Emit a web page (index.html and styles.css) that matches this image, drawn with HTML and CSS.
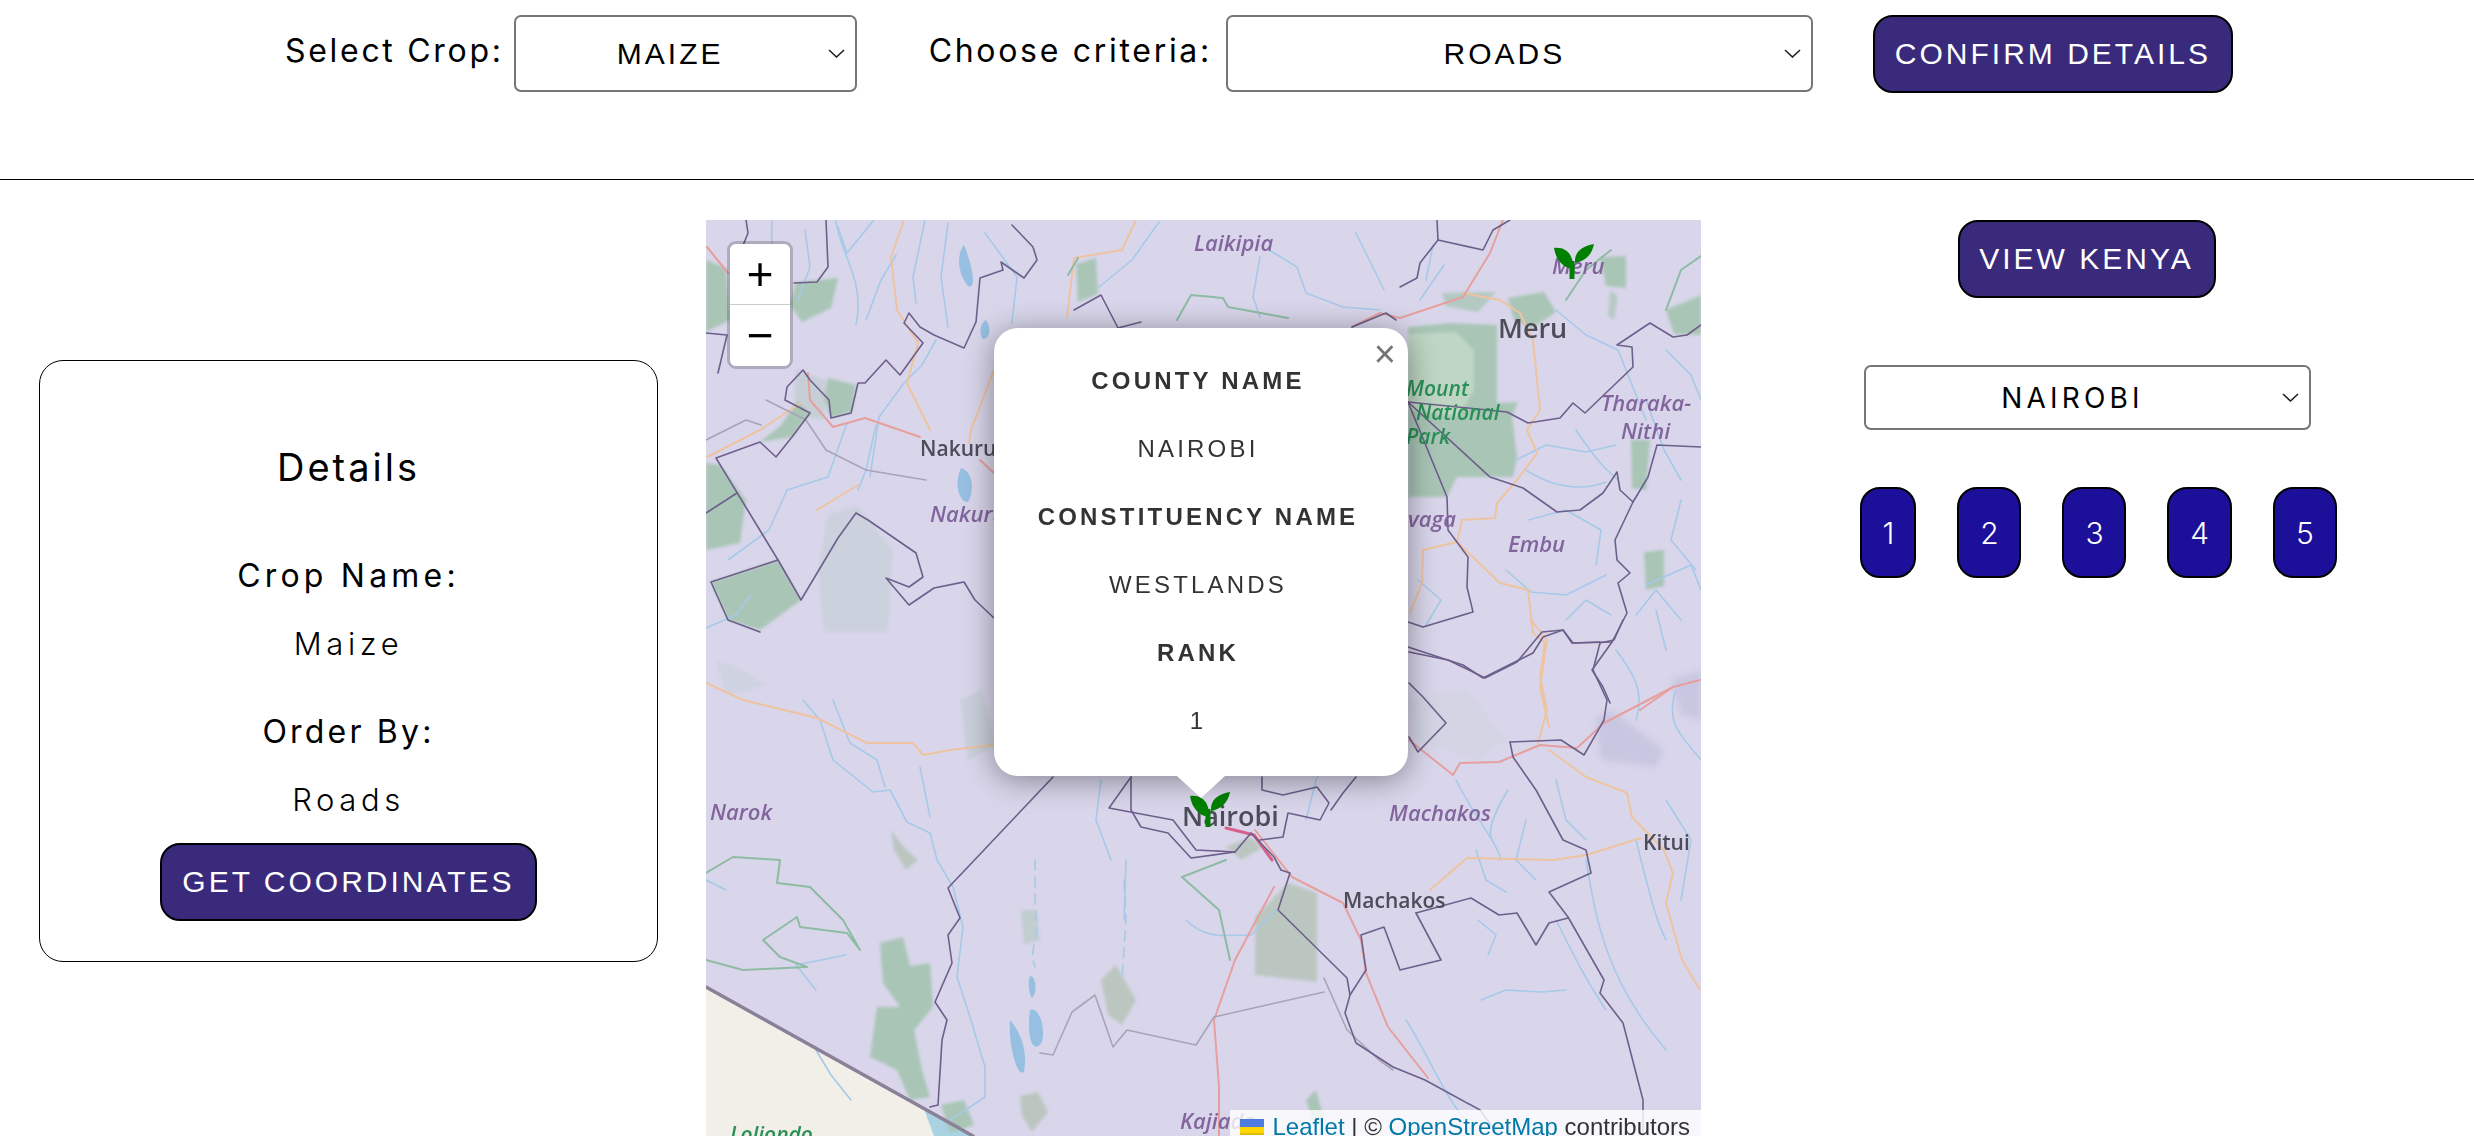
FILE: index.html
```html
<!DOCTYPE html>
<html lang="en" dir="ltr">

<head>
  <meta charset="utf-8">
  <title>Crop Suitability</title>
  <link rel="stylesheet" href="styles.css">
</head>

<body>
  <header class="topbar">
    <label class="top-label label-crop">Select Crop:</label>
    <select class="picker picker-crop">
      <option>MAIZE</option>
    </select>
    <label class="top-label label-criteria">Choose criteria:</label>
    <select class="picker picker-criteria">
      <option>ROADS</option>
    </select>
    <button class="btn btn-confirm" type="button">CONFIRM DETAILS</button>
  </header>

  <main class="content">
    <section class="details">
      <h2 class="details-title">Details</h2>
      <h3 class="details-head head-crop">Crop Name:</h3>
      <p class="details-value">Maize</p>
      <h3 class="details-head head-order">Order By:</h3>
      <p class="details-value">Roads</p>
      <button class="btn btn-coords" type="button">GET COORDINATES</button>
    </section>

    <div class="map">
      <svg class="map-art" viewBox="0 0 995 916" xmlns="http://www.w3.org/2000/svg">
        <defs>
          <g id="sprout">
            <path d="M18 35V17" class="stem" />
            <path d="M0 4C9 3 17 7 19 19C20 22 20 24 19 25C10 24 2 17 0 4Z" />
            <path d="M40 0C38 10 32 17 21 19C20 9 27 2 40 0Z" />
          </g>
        </defs>
        <rect class="land" width="995" height="916" />
        <path class="outside" d="M0 767L267 916H0Z" />
        <path class="outside-lake" d="M218 889L267 916H228Z" />

        <g class="parks">
          <path d="M702 107L744 103L791 105L791 183L812 182L806 197L811 237L807 257L751 257L741 277H702Z" />
          <path class="park-light" d="M702 114L750 112L768 130L768 170L752 196L702 190Z" />
          <path d="M0 243L14 245L40 280L34 323L0 330Z" />
          <path d="M5 362L72 340L95 380L54 410L22 400Z" />
          <path d="M54 222L86 217L104 193L92 181L74 206Z" />
          <path d="M122 158L150 165L146 192L125 198L118 180Z" />
          <path d="M90 62L132 58L125 88L96 102L84 85Z" />
          <path d="M0 40L20 48L24 100L0 112Z" />
          <path d="M370 44L390 38L392 74L372 82Z" />
          <path d="M736 73L790 72L772 92L740 86Z" opacity=".8" />
          <path d="M802 78L838 72L850 92L826 108L808 100Z" />
          <path d="M894 37L920 36L920 68L900 66Z" />
          <path d="M960 90L995 75V115L968 114Z" />
          <path d="M904 70L912 76L908 100L902 96Z" opacity=".7" />
          <path d="M925 220L944 220L940 270L926 268Z" />
          <path d="M938 332L958 330L958 366L940 370Z" />
          <path d="M174 723L197 717L204 746L224 743L227 787L208 810L216 850L224 877L204 880L191 850L164 837L171 787L194 787L177 763Z" />
          <path class="park-gray" d="M549 697L582 663L611 673V762L549 755Z" />
          <path class="park-gray" d="M314 876L332 872L342 892L326 912L316 896Z" />
          <path class="park-gray" d="M395 760L410 745L430 780L416 805L402 795Z" />
          <path class="park-gray" d="M520 627L545 617L556 628L535 640Z" />
          <path class="park-gray" d="M185 610L196 625L212 640L200 650L188 630Z" />
          <path d="M235 885L258 880L268 905L244 913Z" />
          <path d="M600 880L610 870L618 900L608 905Z" />
          <path d="M122 295L150 285L187 330L182 412L118 412L112 350Z" opacity=".25" />
          <path d="M10 440L40 452L60 466L20 475Z" opacity=".2" />
          <path d="M315 690L330 690L334 720L318 725Z" opacity=".5" />
          <path d="M90 150L120 160L118 200L88 195Z" opacity=".4" />
          <path d="M254 480L276 470L290 525L262 540Z" opacity=".3" />
          <path d="M700 480L760 470L800 520L770 540L712 520Z" opacity=".12" />
        </g>
        <path class="haze" d="M889 500L905 490L958 530L950 547L895 540Z" />
        <path class="haze" d="M965 460L995 450V500L975 495Z" />

        <g class="water">
          <path d="M66 0C64 40 72 60 55 100" />
          <path d="M99 10L104 47L92 80" />
          <path d="M132 7L141 33L168 0" />
          <path d="M219 0L207 57L210 83" />
          <path d="M242 3L235 57L242 107" />
          <path d="M279 13L311 57L306 103" />
          <path d="M453 2L426 40L393 67" />
          <path d="M563 30L591 47L600 73L637 87L674 90" />
          <path d="M554 37L547 77L554 97" />
          <path d="M650 13L678 70" />
          <path d="M130 0C132 30 160 60 150 105" />
          <path d="M230 120L216 145L198 163L173 197L164 257" />
          <path d="M141 203L122 257L81 270L63 310L22 340" />
          <path d="M170 205L160 250L152 270" />
          <path d="M0 408L30 395L45 375" />
          <path d="M160 100L175 60L190 35" />
          <path d="M727 25L720 60" />
          <path d="M738 45L714 80" />
          <path d="M850 90L880 115L912 130L940 200" />
          <path d="M870 210C890 240 900 250 912 260" />
          <path d="M810 240L840 225L880 232L910 225" />
          <path d="M820 250C850 270 880 270 900 262" />
          <path d="M822 300L860 290L895 310L890 345" />
          <path d="M800 350L825 372L860 375L900 355" />
          <path d="M940 180L958 230L975 260" />
          <path d="M960 130L985 155L995 180" />
          <path d="M975 280L965 320L990 350" />
          <path d="M940 365L985 345L995 370" />
          <path d="M930 395L950 370L975 400" />
          <path d="M950 390L960 430" />
          <path d="M860 400L880 380L905 395" />
          <path d="M910 430C925 450 940 470 930 500" />
          <path d="M970 470C960 500 970 510 995 540" />
          <path d="M720 405L735 380L712 360" />
          <path d="M97 480L114 500L127 540L167 572L184 570L201 602L224 613L231 640L247 667L257 707L251 757L264 797L279 847L279 877L244 900" />
          <path d="M127 480L144 523L171 540L179 567" />
          <path d="M214 547L224 597" />
          <path d="M750 560C770 600 790 620 795 640" />
          <path d="M802 570C790 590 780 610 786 620" />
          <path d="M880 640C890 700 900 760 960 830" />
          <path d="M480 700C500 720 520 715 545 715C560 700 565 695 570 690" />
          <path d="M930 620C945 680 950 700 960 720" />
          <path d="M700 800C720 830 740 880 760 900" />
          <path d="M850 700C870 740 880 760 900 790" />
          <path d="M772 700L790 715L782 735" />
          <path d="M770 630L780 660L800 672" />
          <path d="M820 600L810 640L830 660" />
          <path d="M850 560L860 600L880 620" />
          <path d="M960 580L985 620L975 680" />
          <path d="M775 780L800 770L835 772L860 770" />
          <path d="M420 640L418 700" />
          <path d="M145 880L125 855L110 830" />
          <path d="M140 735L90 745L110 770" />
          <path d="M0 660L20 670" />
          <path d="M620 540L610 560L600 600" />
          <path d="M395 560L390 600L405 640" />
          <path class="dashed" d="M329 640V680L331 707L326 737L329 747" />
          <path class="dashed" d="M418 660L420 700L416 760" />
        </g>
        <path class="lake" d="M258 25C268 50 270 70 262 66C252 55 250 35 258 25Z" />
        <path class="lake" d="M280 100C288 112 280 122 276 118C272 110 276 102 280 100Z" />
        <path class="lake" d="M255 248C265 250 270 268 262 282C252 282 248 262 255 248Z" />
        <path class="lake" d="M324 790C332 786 340 805 336 822C328 835 320 820 324 790Z" />
        <path class="lake" d="M304 800C314 812 322 830 318 852C310 858 302 820 304 800Z" />
        <path class="lake" d="M324 756C330 756 332 772 326 778C322 772 322 762 324 756Z" />

        <g class="roads-orange">
          <path d="M430 0L416 30L368 38L361 97" />
          <path d="M198 0L185 37L191 90L212 123L201 163L224 210" />
          <path d="M288 150L265 210L263 223" />
          <path d="M1 237L54 210L95 183" />
          <path d="M111 290L152 265" />
          <path d="M0 463L37 480L111 498L161 523L207 523L217 535L244 530L287 525" />
          <path d="M757 73L794 80L814 93L827 120L834 190L821 210L831 233L811 260L791 283L789 298L756 300L751 322L717 330L716 363L704 393" />
          <path d="M751 322L794 363L822 370L827 413L839 423L834 457L841 490L832 523" />
          <path d="M825 400L841 420L834 467L843 507" />
          <path d="M843 530L880 557L921 573L926 597L958 630L967 653L960 683L976 740L994 770" />
          <path d="M724 670L761 638L848 640L880 635L935 618" />
        </g>
        <g class="roads-red">
          <path d="M1 27L22 53" />
          <path d="M102 153L104 180L127 207L159 198L214 217" />
          <path d="M274 240L288 253" />
          <path d="M797 0L784 33L757 77L694 98L674 93L646 107" />
          <path d="M703 520L747 555L754 543L793 542L834 525L871 528L898 503L967 467L994 460" />
          <path d="M508 800L513 867L513 916" />
          <path d="M508 800L529 740L568 667" />
          <path d="M549 610L586 657L637 683L655 720L660 753L682 807L722 858" />
          <path d="M934 490L967 467" />
          <path class="road-hot" d="M520 608L548 615L566 640" />
        </g>
        <g class="lines-green">
          <path d="M0 653L27 637L74 640L71 663L104 667L137 700L154 730L141 713L94 707L91 697L57 720L74 737L101 747L37 750L0 740" />
          <path d="M476 657L513 690L524 740" />
          <path d="M476 657L520 640" />
          <path d="M471 100L485 75L517 78L522 87L582 98" />
          <path d="M362 55L372 38" />
          <path d="M960 90L975 50L995 36" />
          <path d="M860 80L880 50L905 30" />
        </g>
        <g class="borders-gray">
          <path d="M508 797L618 772" />
          <path d="M508 797L490 825L421 810L407 827L389 775L366 792L347 835L334 833" />
          <path d="M618 758L641 810L673 840L687 850" />
          <path d="M60 180L100 200L120 230L160 250L220 260" />
          <path d="M0 220L40 200L55 205" />
        </g>
        <g class="borders">
          <path d="M40 0L42 13L36 28" />
          <path d="M120 0L122 47L111 62L88 63" />
          <path d="M0 113L21 115L12 153" />
          <path d="M306 5L327 27L331 40L318 58L295 42L297 50L274 58L270 102L258 128L228 115L214 107L203 93L198 103L217 123L194 155L180 140L159 163L152 163L145 193L125 198L123 180L104 160L97 150L81 167L79 180L104 193L86 217L70 237L54 222L10 238L72 340L95 380L132 318L150 293L162 300L210 333L217 357L203 367L180 358L203 385L228 368L258 362L269 380L288 398" />
          <path d="M72 340L5 362L22 400L54 412" />
          <path d="M31 273L0 293" />
          <path d="M347 557L242 668L254 698L242 715L246 743L229 782L241 800L236 820L232 885L224 887" />
          <path d="M403 588L425 557M403 588L467 600L490 630L529 632L545 613L568 637L575 650L584 653L572 690L641 758L644 775L639 793L650 823L687 847L719 860L774 890L793 916" />
          <path d="M425 557L425 590L435 607L462 613L485 638L529 632" />
          <path d="M556 557V570L577 575L611 567L623 583L614 600L582 593L577 617L554 620" />
          <path d="M650 557L637 573L625 590" />
          <path d="M804 522L855 520L878 535L898 500L901 480L887 450L894 423L908 420L917 400" />
          <path d="M804 522L807 537L830 570L857 620L880 630L885 653L843 672L862 697L898 760L894 773L917 803L937 880V916" />
          <path d="M710 693L765 678L793 695L811 693L830 725L843 703L862 698" />
          <path d="M710 693L735 740L694 750L678 707L655 715L660 750L644 775" />
          <path d="M703 432L742 440L779 458L811 442L836 412L857 410L866 423L894 422" />
          <path d="M703 463L717 477L740 503L712 532L703 517" />
          <path d="M702 182L801 192L822 203L854 198L867 183L879 193L927 147L926 127L911 125L944 103L967 117L981 115L995 105" />
          <path d="M702 182L784 257L817 268L851 292L874 290L897 273L911 252L914 270L927 282L942 257L951 225L995 227" />
          <path d="M702 182L741 277L742 310L762 337L761 367L767 392L717 407L702 402" />
          <path d="M927 282L909 320L911 340L924 353L912 363L921 393L906 422L867 423L857 410L837 417L827 433L777 458L757 445L702 427" />
          <path d="M906 422L886 450L897 467L904 483" />
          <path d="M731 0L732 20L714 43L711 58L694 67" />
          <path d="M732 20L777 30L787 10L804 0" />
          <path d="M646 107L680 93L690 100" />
          <path d="M368 90L395 75L412 108L435 102" />
        </g>
        <path class="border-country" d="M0 767L267 916" />

        <g class="places">
          <text x="214" y="236">Nakuru</text>
          <text class="place-big" x="792" y="118">Meru</text>
          <text class="place-big" x="476" y="606">Nairobi</text>
          <text x="637" y="688">Machakos</text>
          <text x="937" y="630">Kitui</text>
        </g>
        <g class="regions">
          <text x="488" y="31">Laikipia</text>
          <text x="224" y="302">Nakuru</text>
          <text x="846" y="54">Meru</text>
          <text x="895" y="191">Tharaka-</text>
          <text x="915" y="219">Nithi</text>
          <text x="802" y="332">Embu</text>
          <text x="702" y="307">vaga</text>
          <text x="4" y="600">Narok</text>
          <text x="683" y="601">Machakos</text>
          <text x="474" y="909">Kajiado</text>
        </g>
        <g class="greens">
          <text x="700" y="176">Mount</text>
          <text x="710" y="200">National</text>
          <text x="700" y="224">Park</text>
          <text x="24" y="922">Loliondo</text>
        </g>

        <use href="#sprout" class="marker" x="848" y="24" />
        <use href="#sprout" class="marker" x="484" y="572" />
      </svg>

      <div class="zoom">
        <button class="zoom-btn zoom-in" type="button">+</button>
        <button class="zoom-btn" type="button">&#8722;</button>
      </div>

      <div class="popup">
        <button class="popup-close" type="button">&#215;</button>
        <p class="popup-head">COUNTY NAME</p>
        <p class="popup-text">NAIROBI</p>
        <p class="popup-head">CONSTITUENCY NAME</p>
        <p class="popup-text">WESTLANDS</p>
        <p class="popup-head">RANK</p>
        <p class="popup-text">1</p>
      </div>

      <div class="attribution">
        <svg class="flag" viewBox="0 0 12 8" xmlns="http://www.w3.org/2000/svg">
          <path fill="#4c7be1" d="M0 0h12v4H0z" />
          <path fill="#ffd500" d="M0 4h12v3H0z" />
          <path fill="#e0bc00" d="M0 7h12v1H0z" />
        </svg>
        <a href="#">Leaflet</a> <span class="sep">|</span> &copy; <a href="#">OpenStreetMap</a> contributors
      </div>
    </div>

    <aside class="side">
      <button class="btn btn-kenya" type="button">VIEW KENYA</button>
      <select class="picker picker-county">
        <option>NAIROBI</option>
      </select>
      <div class="ranks">
        <button class="rank" type="button">1</button>
        <button class="rank" type="button">2</button>
        <button class="rank" type="button">3</button>
        <button class="rank" type="button">4</button>
        <button class="rank" type="button">5</button>
      </div>
    </aside>
  </main>
</body>

</html>
```

FILE: styles.css
```css
html,
body {
  height: 100%;
  overflow: hidden;
}

body {
  margin: 0;
  background-color: white;
  color: black;
  font-family: "Inter", "Liberation Sans", sans-serif;
}

.topbar {
  display: flex;
  align-items: flex-start;
  box-sizing: border-box;
  height: 180px;
  padding: 15px 0 0 285px;
  border-bottom: 1px solid black;
}

.top-label {
  margin-top: 16px;
  margin-right: 14px;
  font-size: 32px;
  line-height: 40px;
  letter-spacing: 2.7px;
}

.label-crop {
  margin-right: 10px;
}

.label-criteria {
  margin-left: 72px;
}

.picker {
  appearance: none;
  height: 77px;
  padding: 0 30px 0 0;
  background: white url("data:image/svg+xml,%3Csvg xmlns='http://www.w3.org/2000/svg' viewBox='0 0 17 9'%3E%3Cpath d='M1 1l7.5 7L16 1' fill='none' stroke='%23222' stroke-width='1.6'/%3E%3C/svg%3E") no-repeat right 10px center / 17px 9px;
  border: 2px solid #767676;
  border-radius: 7px;
  color: black;
  font-family: "Liberation Sans", sans-serif;
  font-size: 30px;
  letter-spacing: 3px;
  text-align: center;
}

.picker-crop {
  width: 343px;
}

.picker-criteria {
  width: 587px;
}

.picker-county {
  width: 447px;
  height: 65px;
  margin-top: 67px;
  font-family: "Inter", sans-serif;
  font-size: 28px;
  letter-spacing: 4.2px;
}

.btn {
  height: 78px;
  padding: 0;
  background-color: #3a2a7c;
  border: 2px solid black;
  border-radius: 20px;
  color: white;
  font-family: "Liberation Sans", sans-serif;
  font-size: 30px;
  letter-spacing: 3px;
}

.btn-confirm {
  width: 360px;
  margin-left: 60px;
}

.btn-coords {
  width: 377px;
  margin-top: 19px;
}

.btn-kenya {
  width: 258px;
  margin-right: 2px;
}

.content {
  display: flex;
  align-items: flex-start;
  padding-top: 40px;
}

.details {
  display: flex;
  flex-direction: column;
  align-items: center;
  box-sizing: border-box;
  width: 619px;
  height: 602px;
  margin: 140px 0 0 39px;
  padding-top: 81px;
  border: 1px solid black;
  border-radius: 24px;
}

.details-title {
  margin: 0;
  font-size: 38px;
  font-weight: 400;
  line-height: 50px;
  letter-spacing: 3px;
}

.details-head {
  margin: 60px 0 0;
  font-size: 32px;
  font-weight: 400;
  line-height: 48px;
  letter-spacing: 3.2px;
}

.head-crop {
  letter-spacing: 4.2px;
}

.head-order {
  margin-top: 40px;
}

.details-value {
  margin: 20px 0 0;
  font-size: 31px;
  font-weight: 300;
  line-height: 48px;
  letter-spacing: 4.6px;
}

.map {
  position: relative;
  flex: none;
  width: 995px;
  height: 916px;
  margin-left: 48px;
  overflow: hidden;
}

.map-art {
  display: block;
  width: 995px;
  height: 916px;
}

.land {
  fill: #d9d6eb;
}

.outside {
  fill: #f1efe8;
}

.outside-lake {
  fill: #a9d3e2;
}

.parks {
  fill: #a9c5b6;
  filter: blur(1.5px);
}

.park-light {
  fill: #bfd6c4;
}

.park-gray {
  fill: #bbc6c0;
}

.haze {
  fill: #c8c6e0;
  filter: blur(3px);
}

.water,
.roads-orange,
.roads-red,
.lines-green,
.borders-gray,
.borders,
.border-country {
  fill: none;
  stroke-linejoin: round;
  stroke-linecap: round;
}

.water {
  stroke: #a6c9e8;
  stroke-width: 1.6;
}

.dashed {
  stroke-dasharray: 10 7;
}

.lake {
  fill: #96bfe2;
}

.roads-orange {
  stroke: #eec39f;
  stroke-width: 2;
}

.roads-red {
  stroke: #e79f9e;
  stroke-width: 2;
}

.road-hot {
  stroke: #d8608a;
  stroke-width: 3;
}

.lines-green {
  stroke: #8ebba4;
  stroke-width: 2;
}

.borders-gray {
  stroke: #a9a3b8;
  stroke-width: 1.6;
}

.borders {
  stroke: #6d5f8b;
  stroke-width: 1.6;
}

.border-country {
  stroke: #8a8198;
  stroke-width: 3.5;
}

.places text,
.regions text,
.greens text {
  font-family: "Open Sans", sans-serif;
  font-size: 21px;
}

.places text {
  fill: #4d4d5a;
  font-weight: 600;
}

.places .place-big {
  font-size: 27px;
}

.regions text {
  fill: #83659d;
  font-size: 22px;
  font-style: italic;
  font-weight: 600;
}

.greens text {
  fill: #2a9057;
  font-style: italic;
  font-weight: 600;
}

.marker {
  fill: green;
}

.stem {
  fill: none;
  stroke: green;
  stroke-width: 5;
}

.zoom {
  position: absolute;
  top: 21px;
  left: 21px;
  display: flex;
  flex-direction: column;
  width: 60px;
  border: 3px solid rgba(0, 0, 0, 0.2);
  border-radius: 9px;
}

.zoom-btn {
  width: 60px;
  height: 61px;
  padding: 6px 0 0;
  background-color: white;
  border: none;
  border-radius: 0 0 6px 6px;
  color: black;
  font-family: "Liberation Mono", monospace;
  font-size: 46px;
  font-weight: normal;
  line-height: 56px;
}

.zoom-in {
  border-bottom: 1px solid #ccc;
  border-radius: 6px 6px 0 0;
}

.popup {
  position: absolute;
  top: 108px;
  left: 288px;
  box-sizing: border-box;
  width: 414px;
  height: 448px;
  padding: 19px 6px 0 0;
  background-color: white;
  border-radius: 24px;
  box-shadow: 0 4px 30px rgba(0, 0, 0, 0.4);
  color: #333;
  font-family: "Liberation Sans", sans-serif;
  font-size: 24px;
  text-align: center;
}

.popup::after {
  content: "";
  position: absolute;
  left: 183px;
  bottom: -22px;
  border-top: 22px solid white;
  border-left: 24px solid transparent;
  border-right: 24px solid transparent;
}

.popup p {
  height: 68px;
  margin: 0;
  line-height: 68px;
  letter-spacing: 3.2px;
}

.popup-head {
  font-weight: bold;
}

.popup-close {
  position: absolute;
  top: 11px;
  right: 12px;
  padding: 0;
  background: none;
  border: none;
  color: #757575;
  font-family: "Liberation Sans", sans-serif;
  font-size: 38px;
  line-height: 30px;
}

.attribution {
  position: absolute;
  top: 890px;
  right: 0;
  height: 26px;
  padding: 0 11px 0 10px;
  background-color: rgba(255, 255, 255, 0.8);
  color: #333;
  font-family: "Liberation Sans", sans-serif;
  font-size: 24px;
  line-height: 34px;
  white-space: nowrap;
}

.attribution a {
  color: #0078a8;
  text-decoration: none;
}

.flag {
  width: 24px;
  height: 16px;
  margin-right: 2px;
}

.side {
  display: flex;
  flex-direction: column;
  align-items: center;
  flex: 1;
}

.ranks {
  display: flex;
  gap: 41px;
  margin: 57px 0 0 22px;
}

.rank {
  height: 91px;
  padding: 0 20.9px;
  background-color: #1c0f99;
  border: 2px solid black;
  border-radius: 20px;
  color: white;
  font-family: "Inter", sans-serif;
  font-size: 30px;
  font-weight: 300;
}

.rank:first-child {
  width: 56px;
  padding: 0;
}
```
